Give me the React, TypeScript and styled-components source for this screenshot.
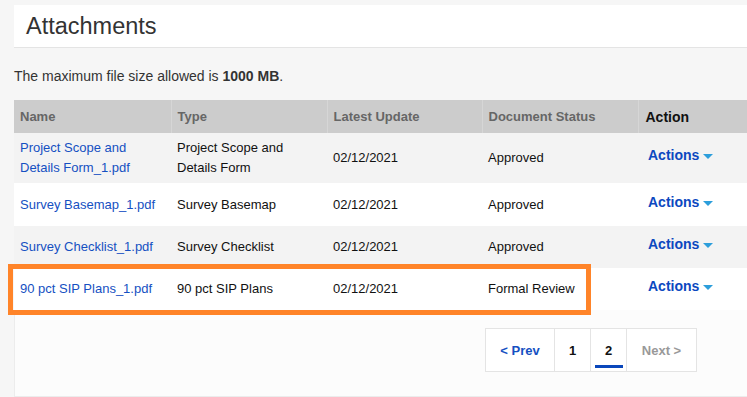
import styled, { createGlobalStyle } from 'styled-components';

const GlobalStyle = createGlobalStyle`
  html, body {
    margin: 0;
    padding: 0;
    background: #f6f6f6;
    overflow: hidden;
  }
  body {
    font-family: "Liberation Sans", Arial, sans-serif;
    color: #222;
  }
`;

const Page = styled.div`
  position: relative;
  padding: 5px 0 0 14px;
  width: 733px;
  height: 392px;
`;

const Header = styled.div`
  height: 42px;
  background: #fff;
  border-bottom: 1px solid #e4e4e4;
  display: flex;
  align-items: center;
  padding-left: 12px;
`;

const Title = styled.h2`
  margin: 0;
  font-size: 23.5px;
  font-weight: normal;
  color: #333;
`;

const Note = styled.p`
  margin: 0;
  padding: 21px 0 17px;
  font-size: 14px;
  line-height: 14px;
  color: #333;
`;

const Table = styled.table`
  width: 100%;
  border-collapse: collapse;
  table-layout: fixed;
  font-size: 13px;
`;

const HeadCell = styled.th<{ $width?: number; $dark?: boolean }>`
  width: ${(p) => (p.$width ? `${p.$width}px` : 'auto')};
  height: 33px;
  padding: 0 6px;
  background: #cccccc;
  border-right: 1px solid #d6d6d6;
  text-align: left;
  font-weight: bold;
  color: ${(p) => (p.$dark ? '#111' : '#666')};
  font-size: ${(p) => (p.$dark ? '14px' : '13px')};
  box-sizing: border-box;
  vertical-align: ${(p) => (p.$dark ? 'bottom' : 'middle')};
  padding-bottom: ${(p) => (p.$dark ? '8px' : '0')};
  padding-left: ${(p) => (p.$dark ? '7px' : '6px')};

  &:last-child {
    border-right: none;
  }
`;

const Row = styled.tr<{ $shade?: boolean; $height: number }>`
  height: ${(p) => p.$height}px;
  background: ${(p) => (p.$shade ? '#f3f3f3' : '#ffffff')};
`;

const Cell = styled.td`
  padding: 0 6px;
  line-height: 20px;
  vertical-align: middle;
  color: #111;
`;

const FileLink = styled.a`
  color: #1550c2;
  text-decoration: none;
  cursor: pointer;
`;

const ActionsButton = styled.span`
  display: inline-flex;
  align-items: center;
  gap: 4px;
  margin: 0 0 6px 4px;
  font-size: 14px;
  font-weight: bold;
  color: #0c48c0;
  cursor: pointer;
`;

const Caret = styled.span`
  width: 0;
  height: 0;
  border-left: 5px solid transparent;
  border-right: 5px solid transparent;
  border-top: 5px solid #2c9edb;
  margin-top: 3px;
`;

const Footer = styled.div`
  background: #fcfcfc;
  border-left: 1px solid #ececec;
  border-bottom: 1px solid #ececec;
  height: 87px;
  display: flex;
  justify-content: flex-end;
  align-items: flex-start;
  padding: 18px 50px 0 0;
  box-sizing: border-box;
`;

const Pager = styled.div`
  display: flex;
  border: 1px solid #e4e4e4;
  background: #fff;
`;

const PageItem = styled.span<{ $width: number; $tone: 'link' | 'plain' | 'muted'; $active?: boolean }>`
  position: relative;
  width: ${(p) => p.$width}px;
  height: 42px;
  display: flex;
  align-items: center;
  justify-content: center;
  font-size: 13px;
  font-weight: bold;
  color: ${(p) => (p.$tone === 'link' ? '#1550c2' : p.$tone === 'muted' ? '#999' : '#111')};
  & + & {
    border-left: 1px solid #e4e4e4;
  }
  &::after {
    content: '';
    display: ${(p) => (p.$active ? 'block' : 'none')};
    position: absolute;
    left: 4px;
    right: 3px;
    bottom: 3px;
    height: 3px;
    background: #0a47bb;
  }
`;

const Highlight = styled.div`
  position: absolute;
  left: 8px;
  top: 264px;
  width: 583px;
  height: 51px;
  border: 5px solid #ff8429;
  box-sizing: border-box;
  pointer-events: none;
`;

const rows = [
  { name: 'Project Scope and Details Form_1.pdf', type: 'Project Scope and Details Form', date: '02/12/2021', status: 'Approved', height: 50 },
  { name: 'Survey Basemap_1.pdf', type: 'Survey Basemap', date: '02/12/2021', status: 'Approved', height: 43 },
  { name: 'Survey Checklist_1.pdf', type: 'Survey Checklist', date: '02/12/2021', status: 'Approved', height: 42 },
  { name: '90 pct SIP Plans_1.pdf', type: '90 pct SIP Plans', date: '02/12/2021', status: 'Formal Review', height: 42 },
];

export default function App() {
  return (
    <>
      <GlobalStyle />
      <Page>
        <Header>
          <Title>Attachments</Title>
        </Header>
        <Note>
          The maximum file size allowed is <b>1000 MB</b>.
        </Note>
        <Table>
          <thead>
            <tr>
              <HeadCell $width={157}>Name</HeadCell>
              <HeadCell $width={156}>Type</HeadCell>
              <HeadCell $width={155}>Latest Update</HeadCell>
              <HeadCell $width={156}>Document Status</HeadCell>
              <HeadCell $dark>Action</HeadCell>
            </tr>
          </thead>
          <tbody>
            {rows.map((r, i) => (
              <Row key={r.name} $shade={i % 2 === 0} $height={r.height}>
                <Cell>
                  <FileLink>{r.name}</FileLink>
                </Cell>
                <Cell>{r.type}</Cell>
                <Cell>{r.date}</Cell>
                <Cell>{r.status}</Cell>
                <Cell>
                  <ActionsButton>
                    Actions <Caret />
                  </ActionsButton>
                </Cell>
              </Row>
            ))}
          </tbody>
        </Table>
        <Footer>
          <Pager>
            <PageItem $width={68} $tone="link">&lt; Prev</PageItem>
            <PageItem $width={35} $tone="plain">1</PageItem>
            <PageItem $width={35} $tone="plain" $active>2</PageItem>
            <PageItem $width={69} $tone="muted">Next &gt;</PageItem>
          </Pager>
        </Footer>
        <Highlight />
      </Page>
    </>
  );
}
